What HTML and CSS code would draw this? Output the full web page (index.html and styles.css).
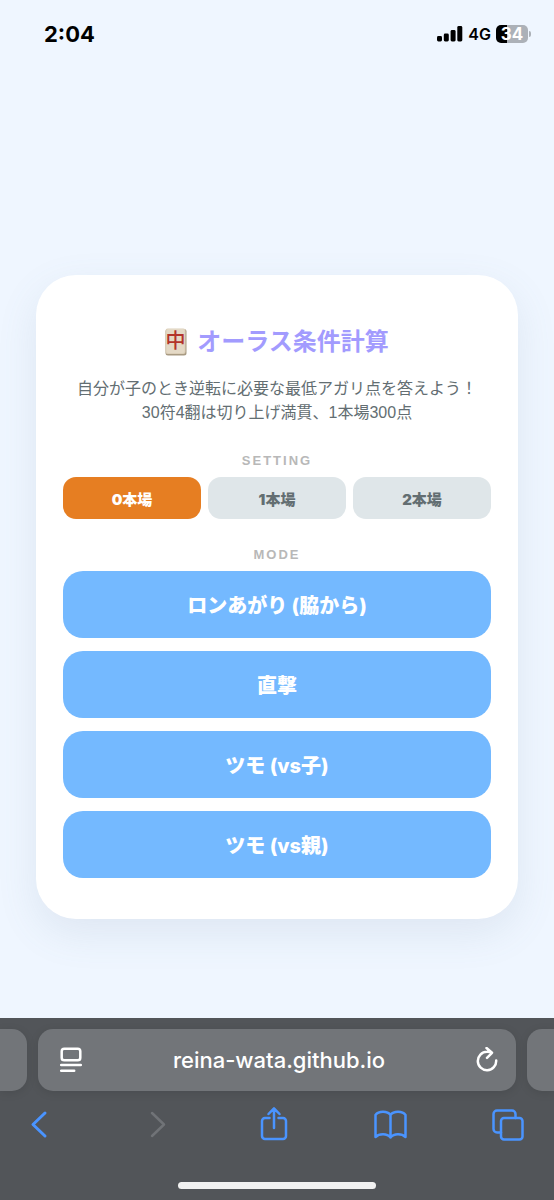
FILE: index.html
```html
<!DOCTYPE html>
<html lang="ja">
<head>
<meta charset="utf-8">
<meta name="viewport" content="width=device-width, initial-scale=1">
<title>オーラス条件計算</title>
<link rel="stylesheet" href="styles.css">
</head>
<body>
<header class="status">
  <time class="clock">2:04</time>
  <div class="indicators">
    <svg width="26" height="16" viewBox="0 0 26 16" aria-hidden="true"><rect x="0" y="10" width="5" height="5.5" rx="1.4"/><rect x="6.8" y="7.5" width="5" height="8" rx="1.4"/><rect x="13.6" y="4" width="5" height="11.5" rx="1.4"/><rect x="20.3" y="0" width="5" height="15.5" rx="1.4"/></svg>
    <span class="network">4G</span>
    <span class="battery"><span class="cell">34</span></span>
  </div>
</header>

<main class="page">
  <section class="card">
    <h1 class="title">
      <svg class="tile" width="22" height="28" viewBox="0 0 22 28" role="img" aria-label="中">
        <rect x="0.5" y="1" width="21" height="26.5" rx="2.5" fill="#a89a82"/>
        <rect x="0.5" y="0.5" width="20" height="25.5" rx="2.2" fill="#dccfb9"/>
        <rect x="1.5" y="1" width="18" height="24" rx="2" fill="#e4d9c6"/>
        <text class="tile-mark" x="10.5" y="20">中</text>
      </svg>
      <span>オーラス条件計算</span>
    </h1>
    <p class="lead">自分が子のとき逆転に必要な最低アガリ点を答えよう！<br>30符4翻は切り上げ満貫、1本場300点</p>

    <h2 class="label" id="setting">SETTING</h2>
    <div class="settings" role="group" aria-labelledby="setting">
      <button class="setting active" type="button" aria-pressed="true">0本場</button>
      <button class="setting" type="button" aria-pressed="false">1本場</button>
      <button class="setting" type="button" aria-pressed="false">2本場</button>
    </div>

    <h2 class="label" id="mode">MODE</h2>
    <div class="modes" role="group" aria-labelledby="mode">
      <button class="mode" type="button">ロンあがり (脇から)</button>
      <button class="mode" type="button">直撃</button>
      <button class="mode" type="button">ツモ (vs子)</button>
      <button class="mode" type="button">ツモ (vs親)</button>
    </div>
  </section>
</main>

<footer class="browser">
  <div class="tabs">
    <div class="tab previous"></div>
    <div class="tab address">
      <button class="icon light" type="button" aria-label="Page menu">
        <svg width="22" height="26" viewBox="0 0 22 26"><rect x="1.7" y="1.7" width="18.6" height="11.6" rx="2.6"/><path d="M1.2 18h19.6M1.2 23.7h13"/></svg>
      </button>
      <input class="url" type="text" value="reina-wata.github.io" aria-label="Address">
      <button class="icon light" type="button" aria-label="Reload">
        <svg width="22" height="26" viewBox="0 0 22 26"><path d="M20.200 13.500A9.200 9.200 0 1 1 11 4.800Q13.500 4.700 15.700 5.600M10.500 1l5.500 4.800-5 5"/></svg>
      </button>
    </div>
    <div class="tab next"></div>
  </div>
  <nav class="toolbar" aria-label="Browser">
    <button class="icon" type="button" aria-label="Back"><svg width="32" height="36" viewBox="0 0 32 36"><path d="M22 7 10 18.5 22 30" stroke-width="3"/></svg></button>
    <button class="icon" type="button" aria-label="Forward" disabled><svg width="32" height="36" viewBox="0 0 32 36"><path d="M12 7l12 11.500L12 30"/></svg></button>
    <button class="icon" type="button" aria-label="Share"><svg width="32" height="36" viewBox="0 0 32 36"><path d="M12.500 12H8a3 3 0 0 0-3 3v15a3 3 0 0 0 3 3h18a3 3 0 0 0 3-3V15a3 3 0 0 0-3-3h-4.500M17 22V2.500M11.500 8 17 2.300 22.500 8"/></svg></button>
    <button class="icon" type="button" aria-label="Bookmarks"><svg width="34" height="36" viewBox="0 0 34 36"><path d="M17.500 9C14.500 4.800 5.500 4.800 2.500 9V31C6 27.500 14 27 17.500 31.500M17.500 9C20.500 4.800 29.500 4.800 32.500 9V31C29 27.500 21 27 17.500 31.500M17.500 9V31.500"/></svg></button>
    <button class="icon" type="button" aria-label="Tabs"><svg width="32" height="36" viewBox="0 0 32 36"><rect x="9" y="12" width="21.500" height="21.500" rx="3"/><path d="M9 26.500H5a3.500 3.500 0 0 1-3.500-3.500V8A3.500 3.500 0 0 1 5 4.500h15A3.500 3.500 0 0 1 23.500 8v4"/></svg></button>
  </nav>
  <div class="home"></div>
</footer>
</body>
</html>
```
FILE: styles.css
```css
* {
  box-sizing: border-box;
}

body {
  display: flex;
  flex-direction: column;
  min-height: 100vh;
  margin: 0;
  overflow-x: hidden;
  background: #eff6ff;
  font-family: Inter, "Noto Sans CJK JP", sans-serif;
}

button,
input {
  border: 0;
  font-family: inherit;
}

.status {
  display: flex;
  justify-content: space-between;
  align-items: center;
  height: 67px;
  padding: 0 23px 0 44px;
}

.clock {
  font-size: 22px;
  font-weight: 700;
}

.indicators {
  display: flex;
  align-items: center;
  gap: 5px;
}

.network {
  font-size: 16px;
  font-weight: 600;
}

.battery {
  display: flex;
  align-items: center;
  gap: 1px;
}

.battery::after {
  content: "";
  width: 2px;
  height: 6px;
  border-radius: 0 2px 2px 0;
  background: #acb1b8;
}

.cell {
  width: 32px;
  border-radius: 5px;
  background: linear-gradient(to right, #000 34%, #acb1b8 34%);
  color: #fff;
  font-size: 17px;
  font-weight: 700;
  line-height: 18px;
  text-align: center;
}

.page {
  display: flex;
  flex: 1;
  flex-direction: column;
  justify-content: center;
  padding: 109px 36px 0;
}

.card {
  padding: 49px 27px 41px;
  border-radius: 40px;
  background: #fff;
  box-shadow: 0 14px 40px rgba(100, 120, 150, 0.12);
  text-align: center;
}

.title {
  display: flex;
  justify-content: center;
  align-items: center;
  gap: 10px;
  margin: 0 0 17px;
  color: #a29bfe;
  font-size: 24px;
  font-weight: 700;
  line-height: 36px;
}

.tile-mark {
  fill: #b3342b;
  font-size: 20px;
  font-weight: 500;
  text-anchor: middle;
}

.lead {
  margin: 0 -10px 28px;
  color: #636e72;
  font-family: "Liberation Sans", "Noto Sans CJK JP", sans-serif;
  font-size: 16px;
  line-height: 24px;
}

.label {
  margin: 0 0 8px;
  color: #b8b8b8;
  font-family: "Liberation Sans", sans-serif;
  font-size: 13px;
  font-weight: 700;
  letter-spacing: 2px;
  line-height: 16px;
}

.settings {
  display: grid;
  grid-template-columns: repeat(3, 1fr);
  gap: 7px;
  margin-bottom: 28px;
}

.setting {
  height: 42px;
  padding: 0;
  border-radius: 13px;
  background: #dfe6e9;
  color: #636e72;
  font-size: 15px;
  font-weight: 900;
}

.setting.active {
  background: #e67e22;
  color: #fff;
}

.modes {
  display: grid;
  gap: 13px;
}

.mode {
  height: 67px;
  padding: 0;
  border-radius: 20px;
  background: #74b9ff;
  color: #fff;
  font-size: 20px;
  font-weight: 800;
}

.browser {
  padding: 11px 0;
  background: #525559;
}

.tabs {
  display: flex;
  gap: 11px;
}

.tab {
  height: 62px;
  background: #727579;
  box-shadow: 0 2px 10px rgba(0, 0, 0, 0.1);
}

.previous {
  width: 27px;
  border-radius: 0 15px 15px 0;
}

.next {
  width: 27px;
  border-radius: 15px 0 0 15px;
}

.address {
  display: flex;
  flex: 1;
  align-items: center;
  padding: 0 18px 0 22px;
  border-radius: 15px;
}

.url {
  flex: 1;
  min-width: 0;
  padding: 0;
  background: none;
  color: #fff;
  font-size: 22px;
  font-weight: 500;
  text-align: center;
}

.icon {
  display: flex;
  padding: 0;
  background: none;
  color: #4a94ff;
}

.icon svg {
  fill: none;
  stroke: currentColor;
  stroke-width: 2.5px;
  stroke-linecap: round;
  stroke-linejoin: round;
}

.icon.light {
  color: #fff;
}

.icon:disabled {
  color: #707377;
}

.toolbar {
  display: flex;
  justify-content: space-between;
  padding: 15px 30px 0 23px;
}

.home {
  width: 198px;
  height: 7px;
  margin: 40px auto 0;
  border-radius: 4px;
  background: #f1f1f1;
}
```
